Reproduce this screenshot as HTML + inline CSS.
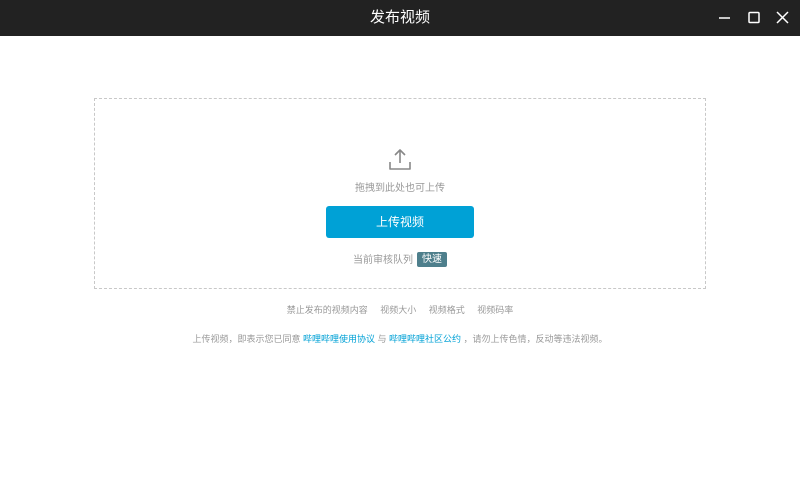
<!DOCTYPE html>
<html><head><meta charset="utf-8"><style>
body{margin:0;width:800px;height:490px;background:#fff;font-family:"Liberation Sans","Noto Sans CJK SC",sans-serif;overflow:hidden;position:relative}
.bar{position:absolute;left:0;top:0;width:800px;height:36px;background:#222}
.title{position:absolute;left:0;width:800px;top:0;line-height:36px;text-align:center;color:#fff;font-size:15px}
.drop{position:absolute;left:94px;top:98px;width:610px;height:189px;border:1px dashed #c8c8c8}
.c{position:absolute;left:0;width:800px;text-align:center}
.btn{position:absolute;left:326px;top:206px;width:148px;height:32px;background:#00a1d6;border-radius:3px;color:#fff;font-size:12px;line-height:32px;text-align:center}
.tag{display:inline-block;background:#4e7f8c;color:#fff;font-size:10px;padding:0 5px;line-height:15px;border-radius:2px;margin-left:4px;vertical-align:1px}
a{color:#00a1d6;text-decoration:none}
</style></head><body>
<div class="bar"></div><div class="title">发布视频</div>
<svg style="position:absolute;left:715px;top:10px" width="80" height="16">
<line x1="4" y1="8" x2="15" y2="8" stroke="#fff" stroke-width="1.5"/>
<rect x="34" y="2.5" width="10" height="10" fill="none" stroke="#fff" stroke-width="1.5" rx="1"/>
<path d="M62 2L73 13M73 2L62 13" stroke="#fff" stroke-width="1.5"/>
</svg>
<div class="drop"></div>
<svg style="position:absolute;left:387px;top:147px" width="26" height="26"><path d="M13 3V16M8 8L13 3L18 8M3 15V22H23V15" fill="none" stroke="#888" stroke-width="1.6" stroke-linejoin="round"/></svg>
<div class="c" style="top:179px;font-size:10px;color:#999">拖拽到此处也可上传</div>
<div class="btn">上传视频</div>
<div class="c" style="top:251px;font-size:10px;color:#999">当前审核队列<span class="tag">快速</span></div>
<div class="c" style="top:303px;font-size:9px;color:#999;word-spacing:0">禁止发布的视频内容&nbsp;&nbsp;&nbsp;&nbsp;&nbsp;视频大小&nbsp;&nbsp;&nbsp;&nbsp;&nbsp;视频格式&nbsp;&nbsp;&nbsp;&nbsp;&nbsp;视频码率</div>
<div class="c" style="top:332px;font-size:9px;color:#999">上传视频，即表示您已同意 <a>哔哩哔哩使用协议</a> 与 <a>哔哩哔哩社区公约</a> ，请勿上传色情，反动等违法视频。</div>
</body></html>
